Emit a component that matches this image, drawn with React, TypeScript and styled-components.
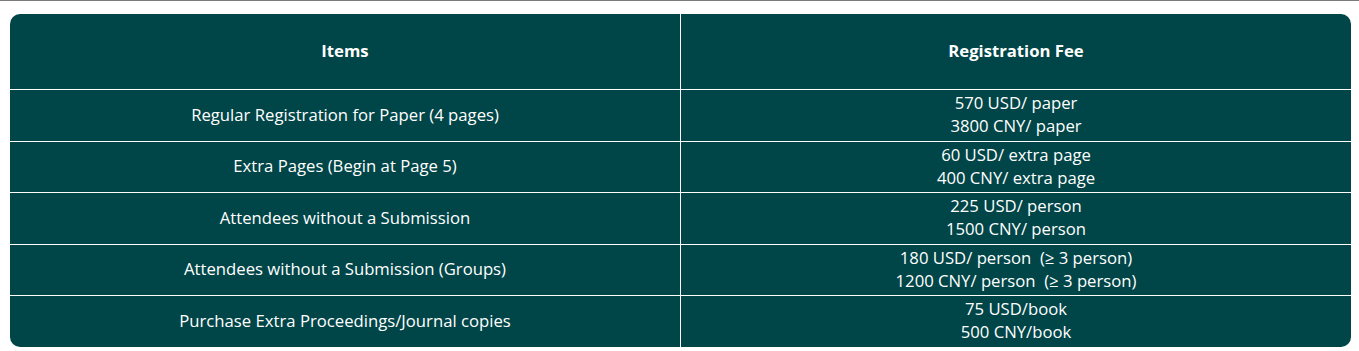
import styled, { createGlobalStyle } from "styled-components";

const GlobalStyle = createGlobalStyle`
  html, body {
    margin: 0;
    padding: 0;
    background: #ffffff;
  }
  body {
    font-family: "Open Sans", "Noto Sans", "Liberation Sans", sans-serif;
  }
`;

const Page = styled.div`
  border-top: 1px solid #7a7a7a;
  padding: 13px 8px 0 10px;
`;

const TableWrap = styled.div`
  background: #004547;
  border-radius: 10px;
  overflow: hidden;
`;

const Table = styled.table`
  width: 100%;
  border-collapse: collapse;
  table-layout: fixed;
  color: #ffffff;
  font-size: 16.7px;
  line-height: 23px;
`;

const HeadCell = styled.th`
  height: 73px;
  padding: 0 8px 2px;
  font-weight: 700;
  text-align: center;
  border-bottom: 1px solid #ffffff;
  & + & {
    border-left: 1px solid #ffffff;
  }
`;

const Row = styled.tr<{ $last?: boolean }>`
  td {
    border-bottom: ${(p) => (p.$last ? "none" : "1px solid #ffffff")};
  }
`;

const Cell = styled.td`
  height: 48.5px;
  padding: 0 8px 2px;
  text-align: center;
  vertical-align: middle;
  & + & {
    border-left: 1px solid #ffffff;
  }
`;

const Line = styled.div`
  white-space: pre;
`;

interface FeeRow {
  item: string;
  fees: string[];
}

const rows: FeeRow[] = [
  { item: "Regular Registration for Paper (4 pages)", fees: ["570 USD/ paper", "3800 CNY/ paper"] },
  { item: "Extra Pages (Begin at Page 5)", fees: ["60 USD/ extra page", "400 CNY/ extra page"] },
  { item: "Attendees without a Submission", fees: ["225 USD/ person", "1500 CNY/ person"] },
  {
    item: "Attendees without a Submission (Groups)",
    fees: ["180 USD/ person  (≥ 3 person)", "1200 CNY/ person  (≥ 3 person)"],
  },
  { item: "Purchase Extra Proceedings/Journal copies", fees: ["75 USD/book", "500 CNY/book"] },
];

export default function App() {
  return (
    <>
      <GlobalStyle />
      <Page>
        <TableWrap>
          <Table>
            <thead>
              <tr>
                <HeadCell>Items</HeadCell>
                <HeadCell>Registration Fee</HeadCell>
              </tr>
            </thead>
            <tbody>
              {rows.map((r, i) => (
                <Row key={r.item} $last={i === rows.length - 1}>
                  <Cell>{r.item}</Cell>
                  <Cell>
                    {r.fees.map((f) => (
                      <Line key={f}>{f}</Line>
                    ))}
                  </Cell>
                </Row>
              ))}
            </tbody>
          </Table>
        </TableWrap>
      </Page>
    </>
  );
}
